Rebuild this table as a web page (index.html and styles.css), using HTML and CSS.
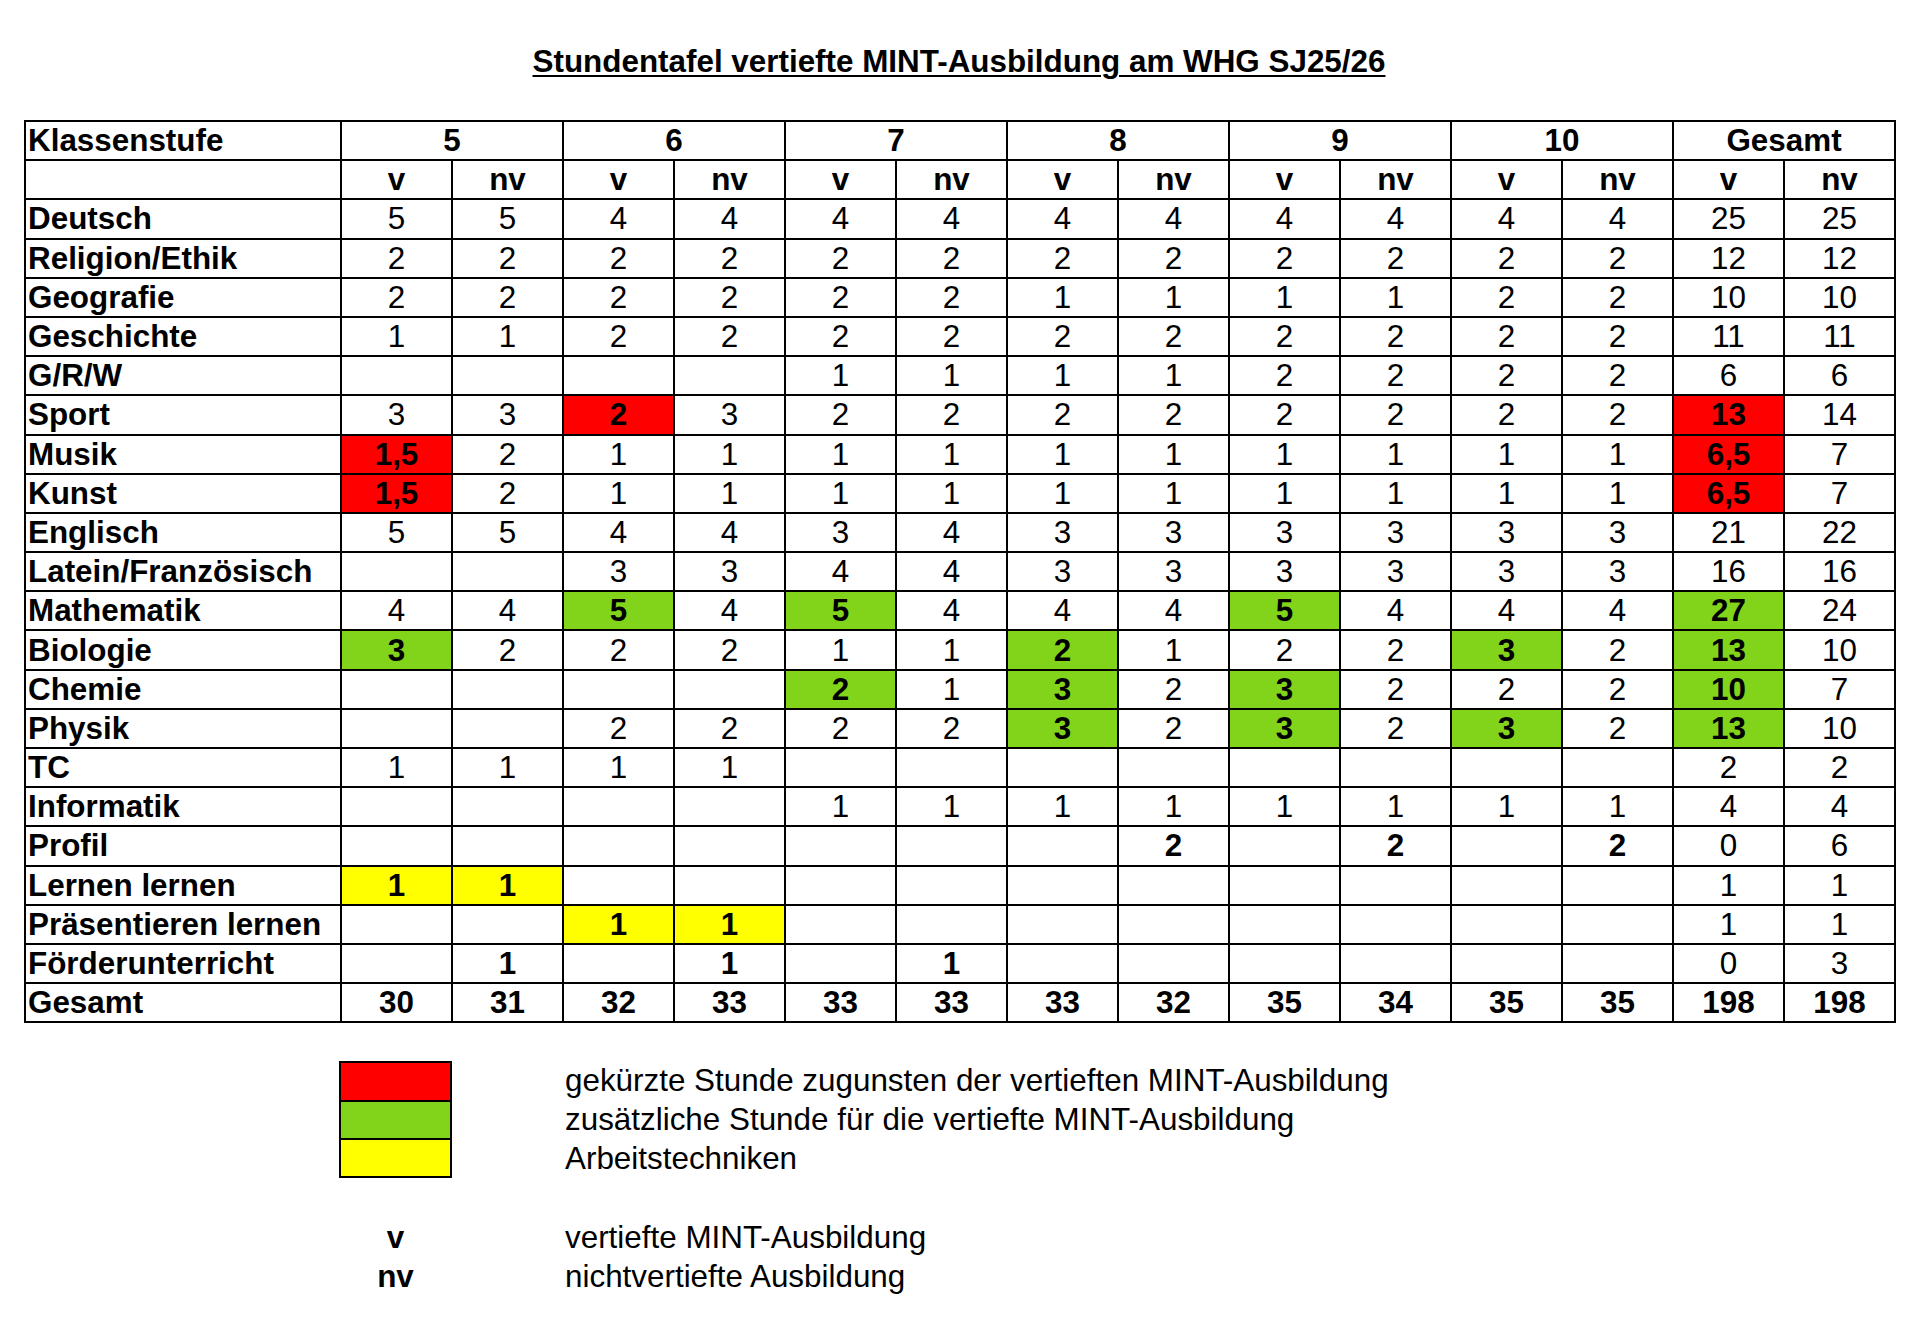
FILE: index.html
```html
<!DOCTYPE html>
<html lang="de">
<head>
<meta charset="utf-8">
<title>Stundentafel vertiefte MINT-Ausbildung am WHG SJ25/26</title>
<link rel="stylesheet" href="styles.css">
</head>
<body>
<main class="page">
  <h1 class="title">Stundentafel vertiefte MINT-Ausbildung am WHG SJ25/26</h1>

  <table class="plan">
    <colgroup>
      <col class="c-subject">
      <col><col><col><col><col><col><col><col><col><col><col><col><col><col>
    </colgroup>
    <thead>
      <tr>
        <th class="subject">Klassenstufe</th>
        <th colspan="2">5</th>
        <th colspan="2">6</th>
        <th colspan="2">7</th>
        <th colspan="2">8</th>
        <th colspan="2">9</th>
        <th colspan="2">10</th>
        <th colspan="2">Gesamt</th>
      </tr>
      <tr>
        <th class="subject"></th>
        <th>v</th><th>nv</th><th>v</th><th>nv</th><th>v</th><th>nv</th><th>v</th><th>nv</th><th>v</th><th>nv</th><th>v</th><th>nv</th><th>v</th><th>nv</th>
      </tr>
    </thead>
    <tbody>
      <tr><th class="subject">Deutsch</th><td>5</td><td>5</td><td>4</td><td>4</td><td>4</td><td>4</td><td>4</td><td>4</td><td>4</td><td>4</td><td>4</td><td>4</td><td>25</td><td>25</td></tr>
      <tr><th class="subject">Religion/Ethik</th><td>2</td><td>2</td><td>2</td><td>2</td><td>2</td><td>2</td><td>2</td><td>2</td><td>2</td><td>2</td><td>2</td><td>2</td><td>12</td><td>12</td></tr>
      <tr><th class="subject">Geografie</th><td>2</td><td>2</td><td>2</td><td>2</td><td>2</td><td>2</td><td>1</td><td>1</td><td>1</td><td>1</td><td>2</td><td>2</td><td>10</td><td>10</td></tr>
      <tr><th class="subject">Geschichte</th><td>1</td><td>1</td><td>2</td><td>2</td><td>2</td><td>2</td><td>2</td><td>2</td><td>2</td><td>2</td><td>2</td><td>2</td><td>11</td><td>11</td></tr>
      <tr><th class="subject">G/R/W</th><td></td><td></td><td></td><td></td><td>1</td><td>1</td><td>1</td><td>1</td><td>2</td><td>2</td><td>2</td><td>2</td><td>6</td><td>6</td></tr>
      <tr><th class="subject">Sport</th><td>3</td><td>3</td><td class="cut">2</td><td>3</td><td>2</td><td>2</td><td>2</td><td>2</td><td>2</td><td>2</td><td>2</td><td>2</td><td class="cut">13</td><td>14</td></tr>
      <tr><th class="subject">Musik</th><td class="cut">1,5</td><td>2</td><td>1</td><td>1</td><td>1</td><td>1</td><td>1</td><td>1</td><td>1</td><td>1</td><td>1</td><td>1</td><td class="cut">6,5</td><td>7</td></tr>
      <tr><th class="subject">Kunst</th><td class="cut">1,5</td><td>2</td><td>1</td><td>1</td><td>1</td><td>1</td><td>1</td><td>1</td><td>1</td><td>1</td><td>1</td><td>1</td><td class="cut">6,5</td><td>7</td></tr>
      <tr><th class="subject">Englisch</th><td>5</td><td>5</td><td>4</td><td>4</td><td>3</td><td>4</td><td>3</td><td>3</td><td>3</td><td>3</td><td>3</td><td>3</td><td>21</td><td>22</td></tr>
      <tr><th class="subject">Latein/Französisch</th><td></td><td></td><td>3</td><td>3</td><td>4</td><td>4</td><td>3</td><td>3</td><td>3</td><td>3</td><td>3</td><td>3</td><td>16</td><td>16</td></tr>
      <tr><th class="subject">Mathematik</th><td>4</td><td>4</td><td class="extra">5</td><td>4</td><td class="extra">5</td><td>4</td><td>4</td><td>4</td><td class="extra">5</td><td>4</td><td>4</td><td>4</td><td class="extra">27</td><td>24</td></tr>
      <tr><th class="subject">Biologie</th><td class="extra">3</td><td>2</td><td>2</td><td>2</td><td>1</td><td>1</td><td class="extra">2</td><td>1</td><td>2</td><td>2</td><td class="extra">3</td><td>2</td><td class="extra">13</td><td>10</td></tr>
      <tr><th class="subject">Chemie</th><td></td><td></td><td></td><td></td><td class="extra">2</td><td>1</td><td class="extra">3</td><td>2</td><td class="extra">3</td><td>2</td><td>2</td><td>2</td><td class="extra">10</td><td>7</td></tr>
      <tr><th class="subject">Physik</th><td></td><td></td><td>2</td><td>2</td><td>2</td><td>2</td><td class="extra">3</td><td>2</td><td class="extra">3</td><td>2</td><td class="extra">3</td><td>2</td><td class="extra">13</td><td>10</td></tr>
      <tr><th class="subject">TC</th><td>1</td><td>1</td><td>1</td><td>1</td><td></td><td></td><td></td><td></td><td></td><td></td><td></td><td></td><td>2</td><td>2</td></tr>
      <tr><th class="subject">Informatik</th><td></td><td></td><td></td><td></td><td>1</td><td>1</td><td>1</td><td>1</td><td>1</td><td>1</td><td>1</td><td>1</td><td>4</td><td>4</td></tr>
      <tr><th class="subject">Profil</th><td></td><td></td><td></td><td></td><td></td><td></td><td></td><td class="strong">2</td><td></td><td class="strong">2</td><td></td><td class="strong">2</td><td>0</td><td>6</td></tr>
      <tr><th class="subject">Lernen lernen</th><td class="skill">1</td><td class="skill">1</td><td></td><td></td><td></td><td></td><td></td><td></td><td></td><td></td><td></td><td></td><td>1</td><td>1</td></tr>
      <tr><th class="subject">Präsentieren lernen</th><td></td><td></td><td class="skill">1</td><td class="skill">1</td><td></td><td></td><td></td><td></td><td></td><td></td><td></td><td></td><td>1</td><td>1</td></tr>
      <tr><th class="subject">Förderunterricht</th><td></td><td class="strong">1</td><td></td><td class="strong">1</td><td></td><td class="strong">1</td><td></td><td></td><td></td><td></td><td></td><td></td><td>0</td><td>3</td></tr>
    </tbody>
    <tfoot>
      <tr><th class="subject">Gesamt</th><td>30</td><td>31</td><td>32</td><td>33</td><td>33</td><td>33</td><td>33</td><td>32</td><td>35</td><td>34</td><td>35</td><td>35</td><td>198</td><td>198</td></tr>
    </tfoot>
  </table>

  <section class="legend">
    <div class="swatches">
      <div class="swatch cut"></div>
      <div class="swatch extra"></div>
      <div class="swatch skill"></div>
    </div>
    <ul class="legend-text">
      <li>gekürzte Stunde zugunsten der vertieften MINT-Ausbildung</li>
      <li>zusätzliche Stunde für die vertiefte MINT-Ausbildung</li>
      <li>Arbeitstechniken</li>
    </ul>
    <dl class="abbr">
      <dt>v</dt><dd>vertiefte MINT-Ausbildung</dd>
      <dt>nv</dt><dd>nichtvertiefte Ausbildung</dd>
    </dl>
  </section>
</main>
</body>
</html>
```

FILE: styles.css
```css
html, body {
  margin: 0;
  padding: 0;
  background: #ffffff;
}

body {
  font-family: "Liberation Sans", Arial, sans-serif;
  font-size: 31.4px;
  color: #000000;
}

.page {
  width: 1870px;
  padding: 42px 0 0 24px;
}

.title {
  margin: 0 0 39px 0;
  font-size: 31.4px;
  line-height: 39px;
  font-weight: bold;
  text-align: center;
  text-decoration: underline;
  text-decoration-thickness: 2px;
  text-underline-offset: 3px;
}

/* ---------- table ---------- */
.plan {
  width: 1870px;
  table-layout: fixed;
  border-collapse: collapse;
  border: 2px solid #000;
}

.plan col {
  width: 111px;
}

.plan col.c-subject {
  width: 316px;
}

.plan th,
.plan td {
  height: 37.2px;
  padding: 0 2px;
  border: 2px solid #000;
  font-size: 31.4px;
  line-height: 35px;
  text-align: center;
  vertical-align: middle;
  white-space: nowrap;
  overflow: hidden;
}

.plan th {
  font-weight: bold;
}

.plan td {
  font-weight: normal;
}

.plan th.subject {
  text-align: left;
  padding-left: 2px;
}

.plan tfoot td {
  font-weight: bold;
}

.plan td.strong {
  font-weight: bold;
}

.cut {
  background: #ff0000;
}

.extra {
  background: #81d41a;
}

.skill {
  background: #ffff00;
}

.plan td.cut,
.plan td.extra,
.plan td.skill {
  font-weight: bold;
}

/* ---------- legend ---------- */
.legend {
  display: grid;
  grid-template-columns: 315px 222px 1fr;
  grid-template-rows: repeat(3, 39px) 39px repeat(2, 39px);
  margin-top: 38px;
}

.swatches {
  grid-column: 2;
  grid-row: 1 / span 3;
  width: 113px;
  display: flex;
  flex-direction: column;
  border: 2px solid #000;
  box-sizing: border-box;
}

.swatch {
  flex: 1;
}

.swatch + .swatch {
  border-top: 2px solid #000;
}

.legend-text {
  grid-column: 3;
  grid-row: 1 / span 3;
  margin: 0;
  padding: 0 0 0 4px;
  list-style: none;
}

.legend-text li {
  height: 39px;
  line-height: 40px;
  white-space: nowrap;
}

.abbr {
  grid-column: 2 / span 2;
  grid-row: 5 / span 2;
  margin: 0;
  display: grid;
  grid-template-columns: 113px 109px 1fr;
  grid-auto-rows: 39px;
}

.abbr dt {
  grid-column: 1;
  font-weight: bold;
  text-align: center;
  line-height: 41px;
}

.abbr dd {
  grid-column: 3;
  margin: 0;
  padding-left: 4px;
  line-height: 41px;
  white-space: nowrap;
}
```
